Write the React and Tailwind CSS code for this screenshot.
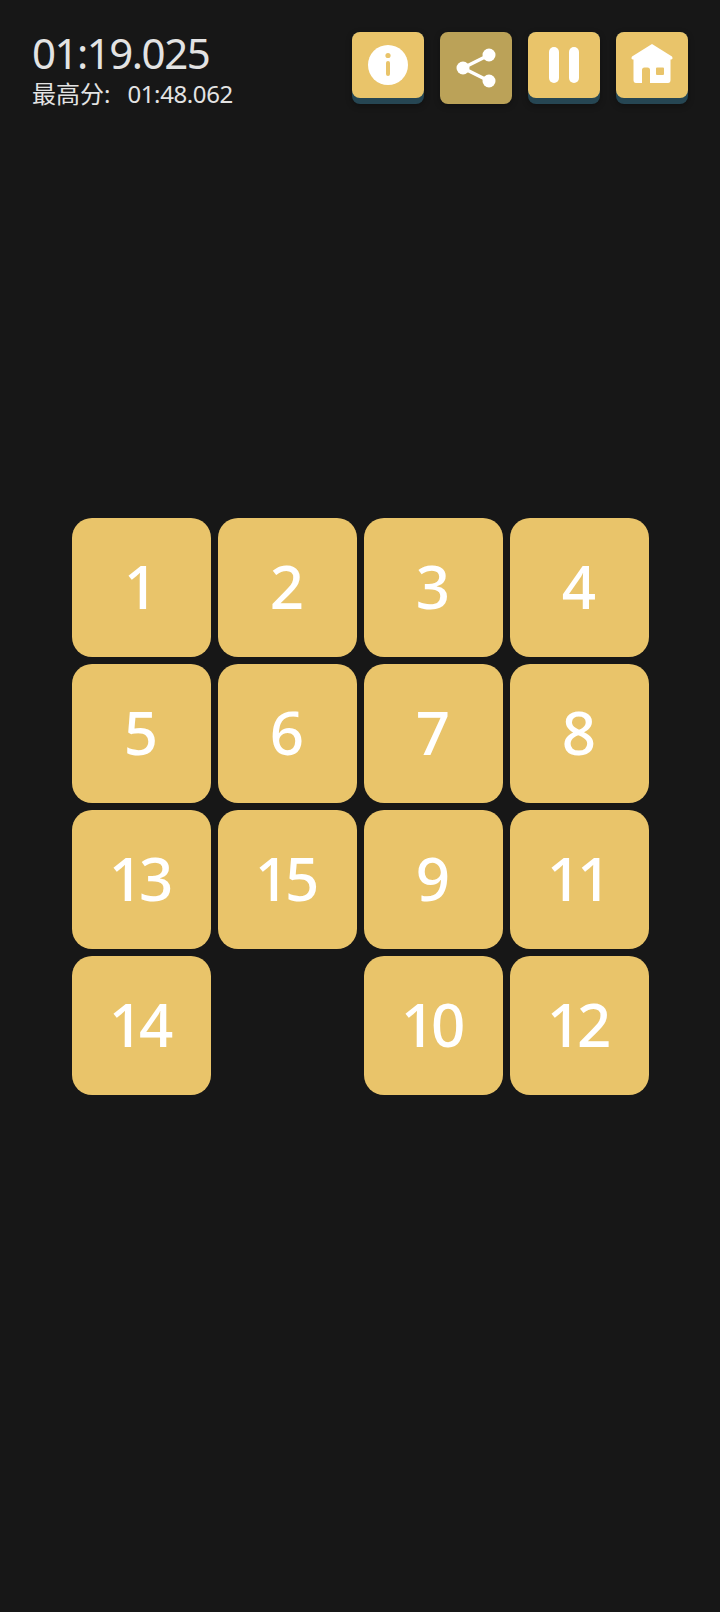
const tiles = [1, 2, 3, 4, 5, 6, 7, 8, 13, 15, 9, 11, 14, null, 10, 12];

function InfoIcon() {
  return (
    <svg width="72" height="66" viewBox="0 0 72 66">
      <circle cx="36" cy="33" r="20" fill="#fff" />
      <circle cx="36" cy="23.5" r="2.6" fill="#e9c46a" />
      <rect x="34" y="29" width="4" height="15" rx="2" fill="#e9c46a" />
    </svg>
  );
}

function ShareIcon() {
  return (
    <svg width="72" height="72" viewBox="0 0 72 72">
      <path d="M49 23 L23 36 L49 49" fill="none" stroke="#fff" strokeWidth="3.5" />
      <circle cx="49" cy="23" r="6.5" fill="#fff" />
      <circle cx="23" cy="36" r="6.5" fill="#fff" />
      <circle cx="49" cy="49" r="6.5" fill="#fff" />
    </svg>
  );
}

function PauseIcon() {
  return (
    <svg width="72" height="66" viewBox="0 0 72 66">
      <rect x="21" y="15" width="10" height="36" rx="5" fill="#fff" />
      <rect x="41" y="15" width="10" height="36" rx="5" fill="#fff" />
    </svg>
  );
}

function HomeIcon() {
  return (
    <svg width="72" height="66" viewBox="0 0 72 66">
      <path
        fillRule="evenodd"
        fill="#fff"
        d="M36 12 L56 24.5 Q57.5 27 55 27.5 L54.5 27.5 L54.5 48 Q54.5 51 52 51 L34 51 L34 38 Q34 35.5 31.5 35.5 L28.5 35.5 Q26 35.5 26 38 L26 51 L20 51 Q17.5 51 17.5 48 L17.5 27.5 L17 27.5 Q14.5 27 16 24.5 Z M41 35.5 Q40 35.5 40 36.5 L40 42 Q40 43 41 43 L47 43 Q48 43 48 42 L48 36.5 Q48 35.5 47 35.5 Z"
      />
    </svg>
  );
}

function HeaderButton({ children }) {
  return (
    <div className="w-[72px] h-[72px] rounded-lg bg-[#264653] shadow-[0_2px_6px_rgba(0,0,0,0.3)]">
      <div className="h-[66px] rounded-lg bg-[#e9c46a] flex items-center justify-center">{children}</div>
    </div>
  );
}

export default function App() {
  return (
    <div className="w-[720px] h-[1612px] bg-[#171717] overflow-hidden font-['Noto_Sans','Noto_Sans_CJK_SC',sans-serif]">
      <div className="flex justify-between pt-8 px-8">
        <div className="text-[#e3e3e3]">
          <div className="text-[42px] leading-[42px] tracking-[-1.5px]">01:19.025</div>
          <div className="text-[24px] leading-[34px] flex mt-[3px]">
            <span>最高分:</span>
            <span className="ml-[17px] tracking-[-0.4px]">01:48.062</span>
          </div>
        </div>
        <div className="flex gap-4">
          <HeaderButton><InfoIcon /></HeaderButton>
          <div className="w-[72px] h-[72px] rounded-lg bg-[#bba258] shadow-[0_2px_6px_rgba(0,0,0,0.3)]">
            <ShareIcon />
          </div>
          <HeaderButton><PauseIcon /></HeaderButton>
          <HeaderButton><HomeIcon /></HeaderButton>
        </div>
      </div>

      <div className="grid grid-cols-4 gap-[7px] w-[577px] mx-auto mt-[407px]">
        {tiles.map((tile, index) =>
          tile ? (
            <div
              key={index}
              className="h-[139px] rounded-[20px] bg-[#e9c46a] text-white text-[60px] font-medium tracking-[-4px] pb-1 pr-1 flex items-center justify-center"
            >
              {tile}
            </div>
          ) : (
            <div key={index} />
          )
        )}
      </div>
    </div>
  );
}
